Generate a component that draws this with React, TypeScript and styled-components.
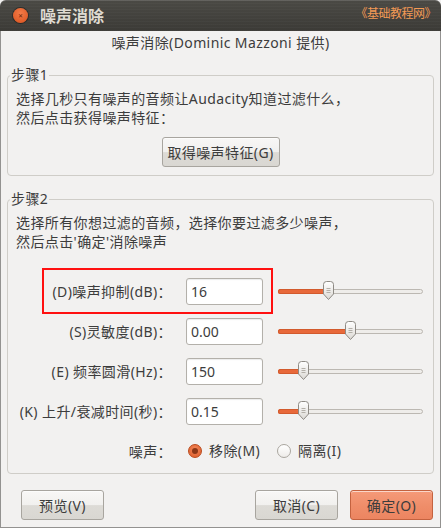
import React from 'react';
import styled, { createGlobalStyle } from 'styled-components';

const GlobalStyle = createGlobalStyle`
  html, body {
    margin: 0;
    padding: 0;
    background: #f2f1f0;
  }
  body {
    font-family: "Noto Sans", "Noto Sans CJK SC", sans-serif;
    color: #3c3c3c;
  }
`;

const Window = styled.div`
  width: 441px;
  height: 528px;
  display: flex;
  flex-direction: column;
  background: #f2f1f0;
  font-size: 14px;
  letter-spacing: 0.4px;
`;

const TitleBar = styled.div`
  height: 31px;
  flex: none;
  display: flex;
  align-items: center;
  padding: 0 5px 0 13px;
  border-radius: 6px 6px 0 0;
  letter-spacing: 0;
  background:
    repeating-linear-gradient(0deg, rgba(255,255,255,0.025) 0 1px, transparent 1px 3px),
    linear-gradient(#4b4a45, #3b3a36);
  box-shadow: inset 0 1px 0 rgba(255,255,255,0.12);
`;

const CloseBtn = styled.div`
  width: 15px;
  height: 15px;
  border-radius: 50%;
  background: radial-gradient(circle at 50% 35%, #f47b48, #d8511d);
  box-shadow: 0 0 0 1px rgba(0,0,0,0.35);
  display: flex;
  align-items: center;
  justify-content: center;
  color: #6a260c;
  font-size: 6px;
  line-height: 1;
  font-family: "DejaVu Sans", sans-serif;
  font-weight: bold;
`;

const Title = styled.div`
  margin-left: 12px;
  font-size: 16px;
  font-weight: bold;
  color: #dfdbd2;
  line-height: 20px;
  flex: 1;
`;

const Watermark = styled.div`
  font-size: 12px;
  color: #f39a55;
  line-height: 18px;
  margin-top: -4px;
  letter-spacing: -0.5px;
`;

const Body = styled.div`
  flex: 1;
  display: flex;
  flex-direction: column;
  padding: 0 6px;
  border: 1px solid #939290;
  border-top: none;
`;

const Subtitle = styled.div`
  margin-top: 2px;
  text-align: center;
  line-height: 20px;
`;

const Group = styled.fieldset<{ $top: number }>`
  margin: ${p => p.$top}px 0 0;
  min-width: 0;
  border: 1px solid #cfcdc8;
  border-radius: 4px;
  padding: 6px 8px 8px;
  display: flex;
  flex-direction: column;
`;

const Legend = styled.legend`
  margin-left: -6px;
  padding: 0 1px;
  line-height: 16px;
`;

const Note = styled.div`
  line-height: 19px;
`;

const Button = styled.button<{ $primary?: boolean }>`
  height: 30px;
  box-sizing: border-box;
  padding: 0;
  white-space: nowrap;
  font: inherit;
  font-size: 14px;
  letter-spacing: 0.4px;
  color: #3c3c3c;
  border-radius: 3px;
  border: 1px solid ${p => (p.$primary ? '#c4623f' : '#a8a59f')};
  background: ${p =>
    p.$primary
      ? 'linear-gradient(#f59a79, #ef8d69 55%, #ec8561)'
      : 'linear-gradient(#f8f7f6, #f1f0ee 50%, #dddbd6 52%, #d9d7d2)'};
  box-shadow: inset 0 1px 0 rgba(255,255,255,0.6);
`;

const CenterButton = styled(Button)`
  align-self: center;
  margin-top: 10px;
  width: 118px;
`;

const Rows = styled.div`
  margin-top: 20px;
  display: flex;
  flex-direction: column;
`;

const Row = styled.div<{ $h?: number }>`
  position: relative;
  height: ${p => p.$h ?? 40}px;
  display: flex;
  align-items: center;
`;

const Label = styled.div`
  width: 156px;
  flex: none;
  text-align: right;
  margin-right: 14px;
  white-space: nowrap;
`;

const Field = styled.input`
  width: 77px;
  height: 27px;
  box-sizing: border-box;
  flex: none;
  border: 1px solid #b3b0aa;
  border-radius: 3px;
  background: #fff;
  padding: 0 4px;
  font: inherit;
  font-size: 14px;
  color: #3c3c3c;
  box-shadow: inset 0 1px 1px rgba(0,0,0,0.08);
  outline: none;
`;

const Highlight = styled.div`
  position: absolute;
  left: 26px;
  top: -3px;
  width: 231px;
  height: 46px;
  box-sizing: border-box;
  border: 2px solid #ff1010;
  pointer-events: none;
`;

const Track = styled.div`
  position: relative;
  margin-left: 15px;
  width: 145px;
  height: 5px;
  box-sizing: border-box;
  border: 1px solid #bcb8b2;
  border-radius: 3px;
  background: #efedea;
`;

const Fill = styled.div`
  position: absolute;
  left: -1px;
  top: -1px;
  height: 5px;
  border-radius: 3px;
  background: #e8693a;
  box-shadow: inset 0 0 0 1px #d25a2d;
`;

const Thumb = styled.svg`
  position: absolute;
  top: -9px;
  width: 13px;
  height: 20px;
`;

const RadioGroup = styled.div`
  margin-left: 2px;
  display: flex;
  align-items: center;
`;

const RadioDot = styled.span<{ $on?: boolean }>`
  width: 14px;
  height: 14px;
  box-sizing: border-box;
  border-radius: 50%;
  display: flex;
  align-items: center;
  justify-content: center;
  border: 1px solid ${p => (p.$on ? '#b9491c' : '#aaa69f')};
  background: ${p =>
    p.$on ? 'radial-gradient(circle at 50% 35%, #f3875a, #dc5a27)' : 'linear-gradient(#ffffff, #eeece9)'};
  &::after {
    content: '';
    display: ${p => (p.$on ? 'block' : 'none')};
    width: 6px;
    height: 6px;
    border-radius: 50%;
    background: #8c3616;
  }
`;

const RadioText = styled.span<{ $gapAfter?: number }>`
  margin-left: 7px;
  margin-right: ${p => p.$gapAfter ?? 0}px;
  line-height: 18px;
`;

const ButtonBar = styled.div`
  margin-top: 16px;
  padding: 0 1px 0 14px;
  display: flex;
  gap: 12px;
`;

const Spacer = styled.div`
  flex: 1;
`;

const WideButton = styled(Button)`
  width: 83px;
`;

const Slider = ({ pos }: { pos: number }) => (
  <Track>
    <Fill style={{ width: pos + 1 }} />
    <Thumb style={{ left: pos - 7 }} viewBox="0 0 13 20">
      <defs>
        <linearGradient id="tg" x1="0" y1="0" x2="0" y2="1">
          <stop offset="0" stopColor="#ffffff" />
          <stop offset="1" stopColor="#dcd9d4" />
        </linearGradient>
      </defs>
      <path
        d="M1.5 3.5 Q1.5 0.5 4.5 0.5 H8.5 Q11.5 0.5 11.5 3.5 V13 L6.5 18.5 L1.5 13 Z"
        fill="url(#tg)"
        stroke="#8e8a84"
        strokeWidth="1"
      />
      <path d="M4.5 7.5 H8.5 M4.5 9.5 H8.5 M4.5 11.5 H8.5" stroke="#b3afa8" strokeWidth="1" />
    </Thumb>
  </Track>
);

const params = [
  { label: '(D)噪声抑制(dB)：', value: '16', pos: 50, mark: true },
  { label: '(S)灵敏度(dB)：', value: '0.00', pos: 72 },
  { label: '(E) 频率圆滑(Hz)：', value: '150', pos: 25 },
  { label: '(K) 上升/衰减时间(秒)：', value: '0.15', pos: 25 },
];

const App = () => {
  return (
    <Window>
      <GlobalStyle />
      <TitleBar>
        <CloseBtn>✕</CloseBtn>
        <Title>噪声消除</Title>
        <Watermark>《基础教程网》</Watermark>
      </TitleBar>
      <Body>
        <Subtitle>噪声消除(Dominic Mazzoni 提供)</Subtitle>

        <Group $top={14}>
          <Legend>步骤1</Legend>
          <Note>
            选择几秒只有噪声的音频让Audacity知道过滤什么，
            <br />
            然后点击获得噪声特征：
          </Note>
          <CenterButton>取得噪声特征(G)</CenterButton>
        </Group>

        <Group $top={15}>
          <Legend>步骤2</Legend>
          <Note>
            选择所有你想过滤的音频，选择你要过滤多少噪声，
            <br />
            然后点击'确定'消除噪声
          </Note>
          <Rows>
            {params.map(p => (
              <Row key={p.label}>
                <Label>{p.label}</Label>
                <Field readOnly value={p.value} />
                <Slider pos={p.pos} />
                {p.mark && <Highlight />}
              </Row>
            ))}
            <Row $h={28} style={{ marginTop: 6 }}>
              <Label>噪声：</Label>
              <RadioGroup>
                <RadioDot $on />
                <RadioText $gapAfter={17}>移除(M)</RadioText>
                <RadioDot />
                <RadioText>隔离(I)</RadioText>
              </RadioGroup>
            </Row>
          </Rows>
        </Group>

        <ButtonBar>
          <WideButton>预览(V)</WideButton>
          <Spacer />
          <WideButton>取消(C)</WideButton>
          <WideButton $primary>确定(O)</WideButton>
        </ButtonBar>
      </Body>
    </Window>
  );
};

export default App;
